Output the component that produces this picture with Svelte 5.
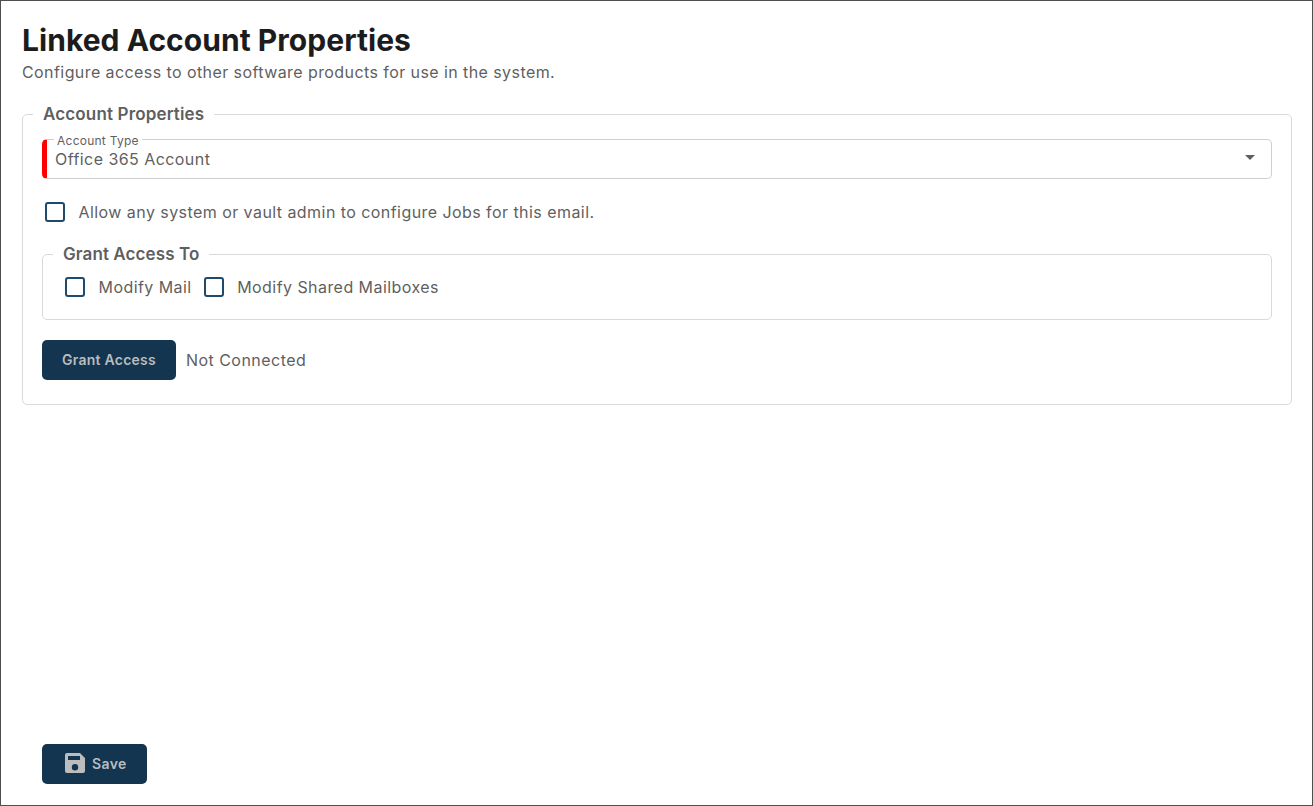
<script>
	let allowAdmins = $state(false);
	let modifyMail = $state(false);
	let modifyShared = $state(false);
</script>

<div class="page">
	<header class="head">
		<h1>Linked Account Properties</h1>
		<p>Configure access to other software products for use in the system.</p>
	</header>

	<fieldset class="group">
		<legend>Account Properties</legend>

		<fieldset class="select">
			<legend>Account Type</legend>
			<span class="value">Office 365 Account</span>
			<span class="arrow"></span>
		</fieldset>

		<label class="check solo">
			<input type="checkbox" bind:checked={allowAdmins} />
			<span>Allow any system or vault admin to configure Jobs for this email.</span>
		</label>

		<fieldset class="group inner">
			<legend>Grant Access To</legend>
			<div class="checks">
				<label class="check">
					<input type="checkbox" bind:checked={modifyMail} />
					<span>Modify Mail</span>
				</label>
				<label class="check">
					<input type="checkbox" bind:checked={modifyShared} />
					<span>Modify Shared Mailboxes</span>
				</label>
			</div>
		</fieldset>

		<div class="connect">
			<button class="btn grant">Grant Access</button>
			<span>Not Connected</span>
		</div>
	</fieldset>

	<footer class="foot">
		<button class="btn save">
			<svg width="20" height="20" viewBox="0 0 20 20" aria-hidden="true">
				<path
					fill="#bdbdbd"
					fill-rule="evenodd"
					d="M2 0h13l5 5v13a2 2 0 0 1-2 2H2a2 2 0 0 1-2-2V2a2 2 0 0 1 2-2zm1 3v4h12V3zm7 8a3.2 3.2 0 1 0 0 6.400a3.200 3.200 0 0 0 0-6.400z"
				/>
			</svg>
			Save
		</button>
	</footer>
</div>

<style>
	:global(body) {
		margin: 0;
		background: #fff;
	}

	.page {
		box-sizing: border-box;
		height: 806px;
		border: 1px solid #4f4f4f;
		padding: 21px 20px 21px 21px;
		display: flex;
		flex-direction: column;
		font-family: Inter, "Liberation Sans", sans-serif;
		color: #5f5f5f;
		background: #fff;
	}

	.head h1 {
		margin: 0;
		font-size: 30px;
		line-height: 36px;
		font-weight: 700;
		letter-spacing: 0.04px;
		color: #1c1c1c;
	}

	.head p {
		margin: 3px 0 0;
		font-size: 16px;
		line-height: 22px;
		letter-spacing: 0.42px;
	}

	fieldset {
		margin: 0;
		min-width: 0;
	}

	.group {
		margin-top: 21px;
		border: 1px solid #d9d9d9;
		border-radius: 5px;
		padding: 0 19px 24px;
	}

	.group > legend {
		margin-left: -9px;
		padding: 0 10px;
		font-size: 17px;
		line-height: 20px;
		font-weight: 600;
		letter-spacing: 0.15px;
	}

	.select {
		position: relative;
		height: 40px;
		box-sizing: border-box;
		margin-top: 15px;
		border: 1px solid #cfcfcf;
		border-left: 5px solid #f00;
		border-radius: 5px;
		padding: 0 8px;
	}

	.select legend {
		height: 1px;
		margin-left: -1px;
		padding: 0 3px;
		font-size: 12px;
		line-height: 3px;
		letter-spacing: 0.25px;
	}

	.value {
		display: block;
		margin-top: 8px;
		font-size: 16px;
		line-height: 22px;
		letter-spacing: 0.44px;
	}

	.arrow {
		position: absolute;
		right: 16px;
		top: 15px;
		border-left: 5.500px solid transparent;
		border-right: 5.500px solid transparent;
		border-top: 5.500px solid #5f5f5f;
	}

	.check {
		display: inline-flex;
		align-items: center;
		gap: 13.500px;
		font-size: 16px;
		line-height: 22px;
		letter-spacing: 0.44px;
	}

	.check input {
		appearance: none;
		flex: none;
		width: 20px;
		height: 20px;
		margin: 0;
		border: 2px solid #1f4a6b;
		border-radius: 3px;
		background: #fff;
	}

	.solo {
		display: flex;
		margin: 22px 0 0 3px;
	}

	.inner {
		margin-top: 21px;
		padding: 0 22px 21px;
	}

	.inner > legend {
		margin-left: -12px;
		letter-spacing: 0.1px;
	}

	.checks {
		display: flex;
		gap: 12px;
		margin-top: 12px;
	}

	.connect {
		display: flex;
		align-items: center;
		gap: 10px;
		margin-top: 20px;
		font-size: 16px;
		letter-spacing: 0.46px;
	}

	.btn {
		height: 40px;
		border: none;
		border-radius: 5px;
		padding: 0 0 2px;
		background: #133550;
		color: #b9bcbe;
		font: 600 14px Inter, "Liberation Sans", sans-serif;
		letter-spacing: 0.25px;
	}

	.grant {
		width: 134px;
	}

	.foot {
		margin-top: auto;
		padding-left: 20px;
	}

	.save {
		width: 105px;
		padding-left: 23px;
		display: flex;
		align-items: center;
		gap: 7px;
		letter-spacing: 0.4px;
	}
</style>
